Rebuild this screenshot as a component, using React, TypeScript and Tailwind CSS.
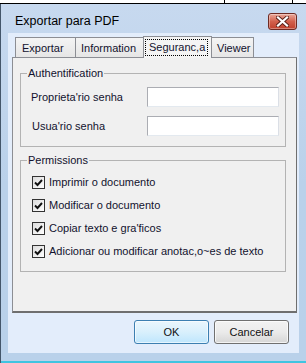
import React from "react"

function CloseButton() {
  return (
    <div className="w-[29px] h-[17px] rounded-[3px] border border-[#6e2a22] bg-gradient-to-b from-[#e9a89a] via-[#d2604c] to-[#c0402c] flex items-center justify-center shadow-[inset_0_0_0_1px_rgba(255,255,255,0.35)]">
      <svg width="13" height="11" viewBox="0 0 13 11">
        <path d="M2 1.5 L11 9.5 M11 1.5 L2 9.5" stroke="#5a2018" strokeWidth="4" strokeLinecap="square" />
        <path d="M2 1.5 L11 9.5 M11 1.5 L2 9.5" stroke="#ffffff" strokeWidth="2.2" strokeLinecap="square" />
      </svg>
    </div>
  )
}

function Checkbox() {
  return (
    <div className="w-[13px] h-[13px] border border-[#333333] bg-gradient-to-br from-[#dcdcdc] to-[#ffffff] flex items-center justify-center shrink-0">
      <svg width="9" height="8" viewBox="0 0 9 8">
        <path d="M1 3.5 L3.5 6 L8 1" stroke="#111111" strokeWidth="1.9" fill="none" />
      </svg>
    </div>
  )
}

function TextField() {
  return (
    <div className="w-[132px] h-[20px] bg-white border border-[#abadb3] border-b-[#e3e9ef] border-r-[#dbdfe6]" />
  )
}

const permissions = [
  "Imprimir o documento",
  "Modificar o documento",
  "Copiar texto e gra'ficos",
  "Adicionar ou modificar anotac,o~es de texto",
]

export default function App() {
  return (
    <div className="w-[306px] h-[363px] overflow-hidden bg-white font-['Liberation_Sans',sans-serif] text-[11px] text-[#12122e]">
      {/* window behind */}
      <div className="h-[4px] bg-white border-b border-black flex">
        <div className="w-[225px] border-r border-black" />
        <div className="w-[68px] border-r border-black" />
      </div>

      <div className="h-[359px] border-l border-[#44566a] bg-gradient-to-b from-[#c7d9ef] via-[#bad1ea] to-[#b9d1ea] flex flex-col">
        {/* title bar */}
        <div className="h-[29px] flex items-start">
          <div className="pl-[14px] pt-[10px] text-[12.5px] leading-[15px] text-black">Exportar para PDF</div>
          <div className="ml-auto mt-[9px] mr-[9px]">
            <CloseButton />
          </div>
        </div>

        {/* client */}
        <div className="ml-[7px] w-[291px] h-[320px] bg-[#e3edfb] flex flex-col">
          {/* tabs */}
          <div className="h-[24px] pl-[7px] pt-[3px] flex items-end">
            <div className="w-[61px] h-[20px] border border-b-0 border-[#8c8e94] bg-gradient-to-b from-[#f4f4f4] to-[#e6e6e6] pl-[6px] pt-[4px] leading-[13px]">
              Exportar
            </div>
            <div className="w-[68px] h-[20px] border border-l-0 border-b-0 border-[#8c8e94] bg-gradient-to-b from-[#f4f4f4] to-[#e6e6e6] pl-[5px] pt-[4px] leading-[13px]">
              Information
            </div>
            <div className="relative z-10 -mb-[1px] -ml-[1px] w-[69px] h-[22px] border border-b-0 border-[#8c8e94] bg-[#f4f4f4] pl-[1px] pt-[2px]">
              <div className="w-[63px] h-[17px] border border-dotted border-black pl-[3px] pt-[1px] leading-[13px] whitespace-nowrap">Seguranc,a</div>
            </div>
            <div className="-ml-[1px] w-[43px] h-[20px] border border-b-0 border-[#8c8e94] bg-gradient-to-b from-[#f4f4f4] to-[#e6e6e6] pl-[5px] pt-[4px] leading-[13px]">
              Viewer
            </div>
          </div>

          {/* panel */}
          <div className="ml-[4px] w-[285px] h-[256px] bg-[#f0f0f0] border border-[#8c8e94] border-r-[#6f6f6f] border-b-[#6f6f6f] border-b-2 pl-[7px] pr-[10px] pt-[8px]">
            <fieldset className="border border-[#b3b3b3] pl-[10px] pr-[6px] pb-[10px]">
              <legend className="-ml-[4px] px-[1px] leading-[14px]">Authentification</legend>
              <div className="pt-[7px] flex flex-col gap-[9px]">
                <div className="flex items-center justify-between">
                  <span>Proprieta'rio senha</span>
                  <TextField />
                </div>
                <div className="flex items-center justify-between">
                  <span className="pl-[1px]">Usua'rio senha</span>
                  <TextField />
                </div>
              </div>
            </fieldset>

            <fieldset className="mt-[6px] border border-[#b3b3b3] pl-[11px] pb-[8px]">
              <legend className="-ml-[5px] px-[1px] leading-[14px]">Permissions</legend>
              <div className="pt-[4px] flex flex-col">
                {permissions.map((p) => (
                  <div key={p} className="h-[23px] flex items-center gap-[4px]">
                    <Checkbox />
                    <span>{p}</span>
                  </div>
                ))}
              </div>
            </fieldset>
          </div>

          {/* buttons */}
          <div className="mt-[7px] pr-[10px] flex justify-end gap-[5px]">
            <button className="w-[75px] h-[24px] rounded-[3px] border border-[#3c7fb1] bg-gradient-to-b from-[#eaf6fd] via-[#d9f0fc] to-[#bee6fd] text-[#111] shadow-[inset_0_0_0_1px_rgba(255,255,255,0.6)]">
              OK
            </button>
            <button className="w-[75px] h-[24px] rounded-[3px] border border-[#707070] bg-gradient-to-b from-[#f2f2f2] via-[#ebebeb] to-[#d6d6d6] text-[#111] shadow-[inset_0_0_0_1px_rgba(255,255,255,0.7)]">
              Cancelar
            </button>
          </div>
        </div>

        <div className="flex-1" />
        <div className="h-[2px] bg-[#3fc4e0]" />
      </div>
    </div>
  )
}
